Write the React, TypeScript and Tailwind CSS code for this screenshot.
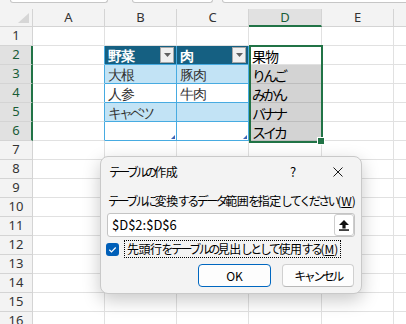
import React from 'react';

const rows = Array.from({ length: 16 }, (_, i) => i + 1);
const data: Record<number, [string, string, string]> = {
  2: ['野菜', '肉', '果物'],
  3: ['大根', '豚肉', 'りんご'],
  4: ['人参', '牛肉', 'みかん'],
  5: ['キャベツ', '', 'バナナ'],
  6: ['', '', 'スイカ'],
};

const KANA = /[\u3040-\u30ff]/;

function JP({ text, k, a }: { text: string; k: string; a: string }) {
  const parts = text.match(/[\u3040-\u30ff]+|[^\u3040-\u30ff]+/g) || [];
  return (
    <>
      {parts.map((p, i) => (
        <span key={i} className={KANA.test(p) ? a : k}>
          {p}
        </span>
      ))}
    </>
  );
}

const cellText = 'flex items-center pl-[3px] pt-[1px] text-[14px] leading-none whitespace-nowrap overflow-hidden';
const grid = 'border-r border-b border-[#e1e1e1]';

function CellJP({ text }: { text: string }) {
  return <JP text={text} k="tracking-[-1px]" a="tracking-[-3px]" />;
}

function DlgJP({ text }: { text: string }) {
  return <JP text={text} k="tracking-[-0.5px]" a="tracking-[-2.5px]" />;
}

function FilterBtn() {
  return (
    <div className="absolute right-[2px] top-[1px] w-[14px] h-[16px] bg-[#f0f0f0] border border-[#a8a8a8] flex items-center justify-center">
      <svg width="7" height="4" viewBox="0 0 7 4">
        <path d="M0 0h7L3.5 4z" fill="#606060" />
      </svg>
    </div>
  );
}

function ResizeMark() {
  return (
    <svg className="absolute right-[1px] bottom-[1px]" width="4" height="4" viewBox="0 0 4 4">
      <path d="M4 0V4H0z" fill="#3d63b5" />
    </svg>
  );
}

function tableCell(r: number, text: string) {
  if (r === 2) {
    return (
      <div className={`relative bg-[#156082] text-white font-bold border-r border-b border-[#47abe1] ${cellText}`}>
        <CellJP text={text} />
        <FilterBtn />
      </div>
    );
  }
  if (r === 3 || r === 5) {
    return (
      <div className={`relative bg-[#c2e3f5] border-r border-b border-[#47abe1] ${cellText}`}>
        <CellJP text={text} />
      </div>
    );
  }
  return (
    <div className={`relative bg-white border-r border-b border-[#47abe1] ${cellText}`}>
      <CellJP text={text} />
      {r === 6 ? <ResizeMark /> : null}
    </div>
  );
}

export default function App() {
  return (
    <div className="relative w-[406px] h-[324px] overflow-hidden bg-white text-black font-['Noto_Sans_CJK_JP',sans-serif]">
      {/* top strip */}
      <div className="h-[9px] bg-[#f3f3f3] flex items-start pl-[10px]">
        <div className="w-[98px] h-[3px] bg-white border-x border-b border-[#c6c6c6] rounded-b-[4px]" />
        <div className="ml-[24px] w-[81px] h-[3px] bg-white border-x border-b border-[#c6c6c6] rounded-b-[4px]" />
        <div className="ml-[9px] flex-1 mr-[-8px] h-[3px] bg-white border-x border-b border-[#c6c6c6] rounded-b-[4px]" />
      </div>

      {/* sheet */}
      <div className="grid grid-cols-[33px_72px_72px_72px_73px_72px_1fr] grid-rows-[18px] auto-rows-[19px] font-['Noto_Sans',sans-serif] text-[13px] text-[#333]">
        <div className="relative bg-[#f3f3f3] border-r border-b border-[#d4d4d4]">
          <svg className="absolute right-[3px] bottom-[3px]" width="11" height="10" viewBox="0 0 11 10">
            <polygon points="11,0 11,10 0,10" fill="#d6d6d6" />
          </svg>
        </div>
        <div className="bg-[#f3f3f3] border-r border-b border-[#d4d4d4] flex items-center justify-center">A</div>
        <div className="bg-[#f3f3f3] border-r border-b border-[#d4d4d4] flex items-center justify-center">B</div>
        <div className="bg-[#f3f3f3] border-r border-b border-[#d4d4d4] flex items-center justify-center">C</div>
        <div className="bg-[#e1e1e1] border-r border-[#d4d4d4] border-b-2 border-b-[#217346] flex items-center justify-center text-[#185c37] pt-[1px]">D</div>
        <div className="bg-[#f3f3f3] border-r border-b border-[#d4d4d4] flex items-center justify-center">E</div>
        <div className="bg-[#f3f3f3] border-b border-[#d4d4d4]" />

        {rows.map((r) => {
          const sel = r >= 2 && r <= 6;
          const d = data[r];
          return (
            <React.Fragment key={r}>
              {sel ? (
                <div className="bg-[#e1e1e1] border-b border-[#d4d4d4] border-r-2 border-r-[#217346] flex items-center justify-center text-[#185c37] pl-[1px]">
                  {r}
                </div>
              ) : (
                <div className="bg-[#f3f3f3] border-r border-b border-[#d4d4d4] flex items-center justify-center">{r}</div>
              )}
              {sel ? <div className="border-b border-[#e1e1e1] border-r border-r-[#47abe1]" /> : <div className={grid} />}
              {sel ? tableCell(r, d[0]) : <div className={grid} />}
              {sel ? tableCell(r, d[1]) : <div className={grid} />}
              {sel ? (
                r === 2 ? (
                  <div className={`bg-white border-b border-[#e1e1e1] text-black font-['Noto_Sans_CJK_JP',sans-serif] ${cellText}`}>
                    <CellJP text={d[2]} />
                  </div>
                ) : (
                  <div className={`bg-[#d3d3d3] border-b border-[#bdbdbd] text-black font-['Noto_Sans_CJK_JP',sans-serif] ${cellText}`}>
                    <CellJP text={d[2]} />
                  </div>
                )
              ) : (
                <div className={grid} />
              )}
              <div className={grid} />
              <div className="border-b border-[#e1e1e1]" />
            </React.Fragment>
          );
        })}
      </div>

      {/* selection outline */}
      <div className="absolute left-[249px] top-[45px] w-[74px] h-[98px] border-2 border-[#217346]" />
      <div className="absolute left-[317px] top-[137px] w-[8px] h-[8px] bg-[#217346] border border-white" />

      {/* dialog */}
      <div className="absolute left-[100px] top-[156px] w-[262px] h-[138px] bg-[#f3f3f3] rounded-[8px] border border-[#c9c9c9] shadow-[0_6px_18px_rgba(0,0,0,0.22)] flex flex-col px-[6px] text-[12px] text-black">
        <div className="h-[30px] flex items-center">
          <span className="ml-[2px]">
            <JP text="テーブルの作成" k="tracking-[-0.5px]" a="tracking-[-2.8px]" />
          </span>
          <div className="ml-auto w-[32px] flex justify-center text-[13px]">?</div>
          <div className="ml-[12px] w-[34px] flex justify-center">
            <svg width="10" height="10" viewBox="0 0 10 10">
              <path d="M0.5 0.5L9.5 9.5M9.5 0.5L0.5 9.5" stroke="#1a1a1a" strokeWidth="1" />
            </svg>
          </div>
        </div>
        <div className="mt-[6px] h-[16px] leading-[16px] ml-[1px] whitespace-nowrap">
          <DlgJP text="テーブルに変換するデータ範囲を指定してください" />(<span className="underline">W</span>)
        </div>
        <div className="relative mt-[4px] h-[24px] bg-white border border-[#c4c4c4] rounded-[3px] flex items-center pl-[4px] text-[13px]">
          $D$2:$D$6
          <div className="absolute right-0 top-0 w-[20px] h-[22px] bg-white border border-[#cdcdcd] rounded-[3px] flex items-center justify-center">
            <svg width="10" height="11" viewBox="0 0 10 11">
              <path d="M5 0L10 5H6.6V8.4H3.4V5H0z" fill="#111" />
              <rect x="0" y="9.3" width="10" height="1.5" fill="#111" />
            </svg>
          </div>
        </div>
        <div className="mt-[3px] h-[18px] flex items-center">
          <div className="ml-[-1px] w-[13px] h-[13px] rounded-[3px] bg-[#005fb8] flex items-center justify-center">
            <svg width="13" height="13" viewBox="0 0 13 13">
              <path d="M3.3 6.8L5.5 8.9L9.7 4.5" stroke="white" strokeWidth="1.2" fill="none" />
            </svg>
          </div>
          <div className="ml-[5px] h-[18px] border border-dotted border-black px-[2px] flex items-center whitespace-nowrap">
            <DlgJP text="先頭行をテーブルの見出しとして使用する" />(<span className="underline">M</span>)
          </div>
        </div>
        <div className="mt-[6px] flex justify-end gap-[11px] mr-[1px]">
          <div className="w-[73px] h-[23px] rounded-[4px] bg-[#fdfdfd] border border-[#0067c0] flex items-center justify-center">OK</div>
          <div className="w-[72px] h-[23px] rounded-[4px] bg-[#fdfdfd] border border-[#d0d0d0] border-b-[#b8b8b8] flex items-center justify-center">
            <DlgJP text="キャンセル" />
          </div>
        </div>
      </div>
    </div>
  );
}
